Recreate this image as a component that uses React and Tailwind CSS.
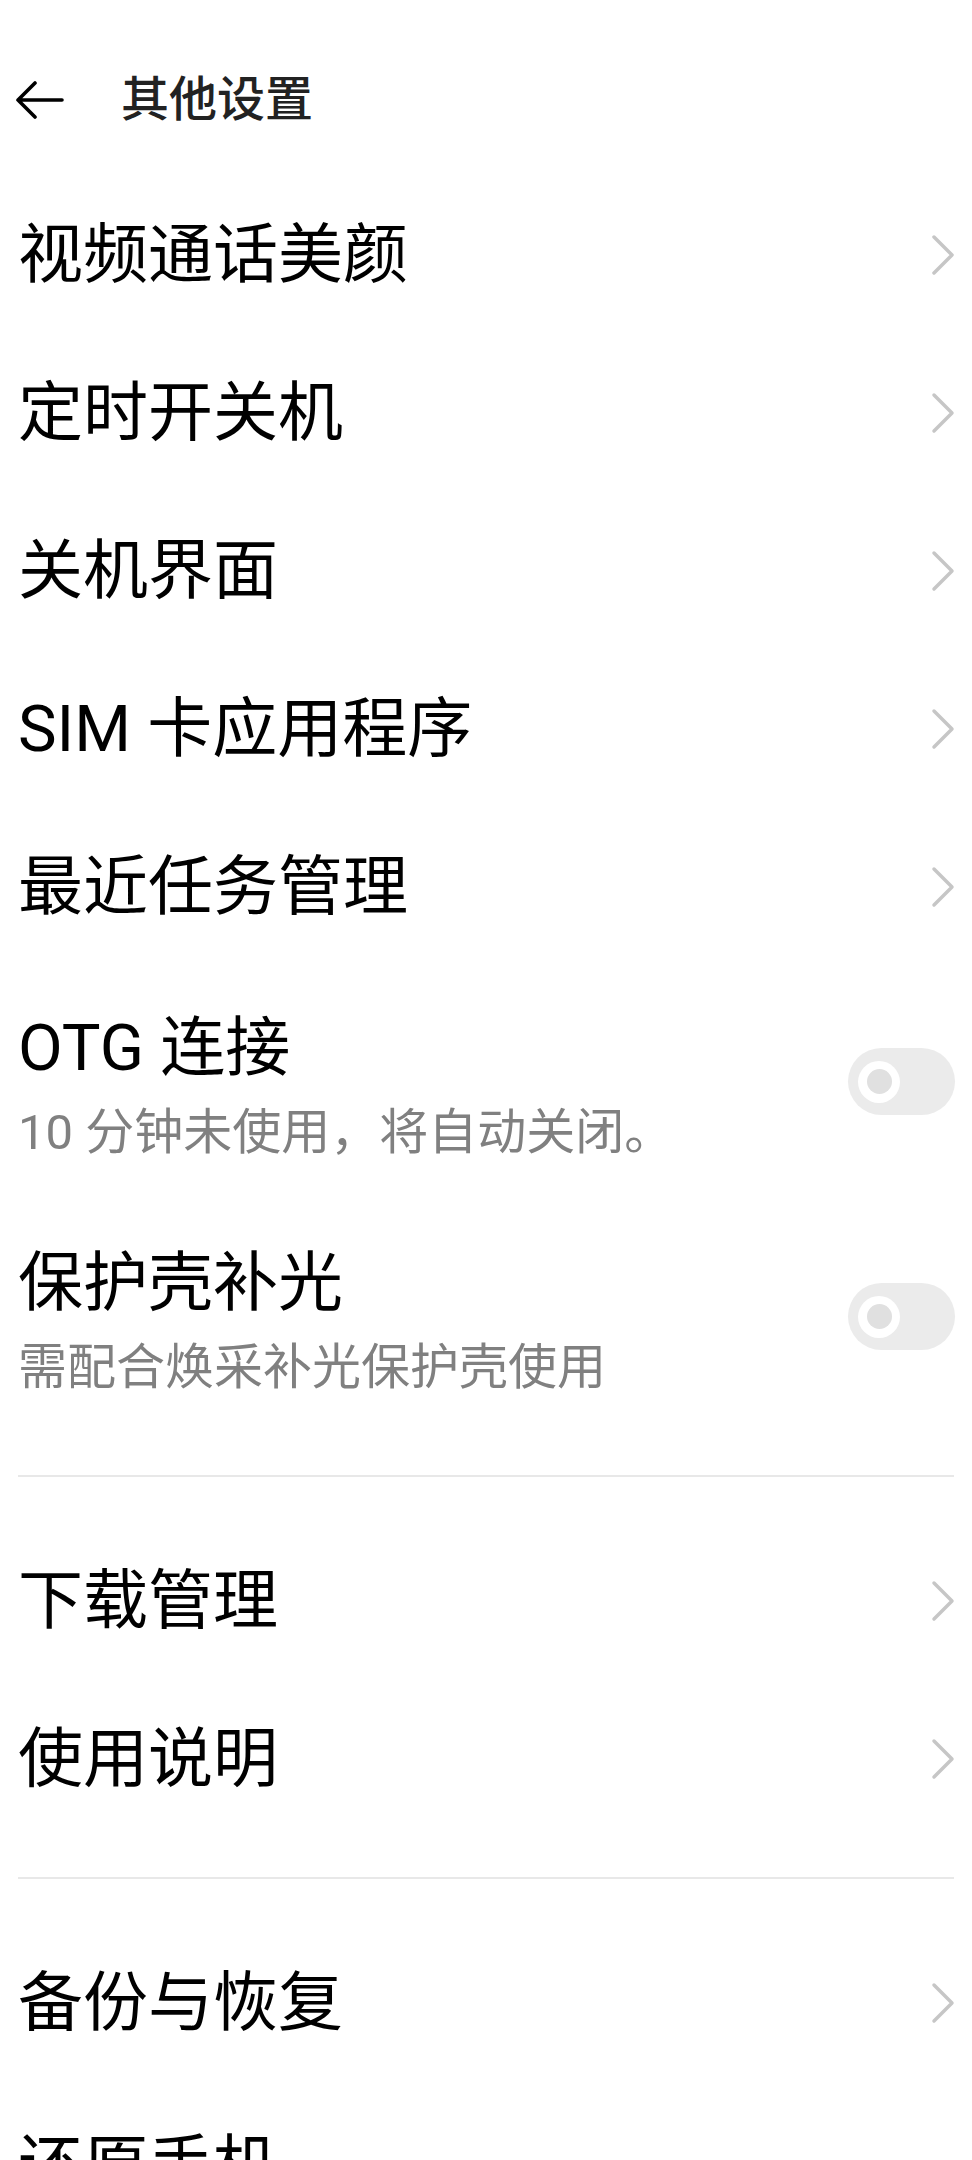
import React from "react";

const FONT = { fontFamily: 'Roboto, "Noto Sans CJK SC", sans-serif' };

function Chevron() {
  return (
    <svg width="26" height="42" viewBox="0 0 26 42" fill="none" className="shrink-0">
      <polyline points="4,3 22,21 4,39" stroke="#c6c6c6" strokeWidth="3.5" strokeLinecap="round" strokeLinejoin="round" />
    </svg>
  );
}

function Toggle() {
  return (
    <div className="w-[107px] h-[67px] rounded-full bg-[#ebebeb] flex items-center pl-[10px] shrink-0">
      <div className="w-[42px] h-[42px] rounded-full bg-white flex items-center justify-center">
        <div className="w-[25px] h-[25px] rounded-full bg-[#e0e0e0]" />
      </div>
    </div>
  );
}

function NavRow({ label, chevron = true }) {
  return (
    <div className="h-[158px] flex items-center justify-between pl-[18px] pr-[16px]">
      <span className="text-[65px] leading-[80px] text-black">{label}</span>
      {chevron && <Chevron />}
    </div>
  );
}

function ToggleRow({ label, sub }) {
  return (
    <div className="h-[235px] flex items-start justify-between pl-[18px] pr-[17px] pt-[42px]">
      <div className="flex flex-col gap-[15px]">
        <span className="text-[65px] leading-[80px] text-black">{label}</span>
        <span className="text-[49px] leading-[60px] text-[#808080]">{sub}</span>
      </div>
      <div className="mt-[40px]">
        <Toggle />
      </div>
    </div>
  );
}

function Divider() {
  return (
    <div className="pt-[39px] pb-[45px] px-[18px]">
      <div className="h-[2px] bg-[#e8e8e8]" />
    </div>
  );
}

export default function App() {
  return (
    <div className="w-[972px] h-[2160px] overflow-hidden bg-white" style={FONT}>
      <div className="pt-[76px] pb-[52px] pl-[16px] flex items-center h-[176px] box-border">
        <svg width="48" height="38" viewBox="0 0 48 38" fill="none" className="shrink-0">
          <path d="M46 19H2M19 2L2 19L19 36" stroke="#000" strokeWidth="3.6" strokeLinecap="round" strokeLinejoin="round" />
        </svg>
        <span className="ml-[57px] text-[48px] leading-[48px] font-medium text-[#222]">其他设置</span>
      </div>
      <NavRow label="视频通话美颜" />
      <NavRow label="定时开关机" />
      <NavRow label="关机界面" />
      <NavRow label="SIM 卡应用程序" />
      <NavRow label="最近任务管理" />
      <ToggleRow label="OTG 连接" sub="10 分钟未使用，将自动关闭。" />
      <ToggleRow label="保护壳补光" sub="需配合焕采补光保护壳使用" />
      <Divider />
      <NavRow label="下载管理" />
      <NavRow label="使用说明" />
      <Divider />
      <NavRow label="备份与恢复" />
      <div className="pt-[5px]">
        <NavRow label="还原手机" chevron={false} />
      </div>
    </div>
  );
}
